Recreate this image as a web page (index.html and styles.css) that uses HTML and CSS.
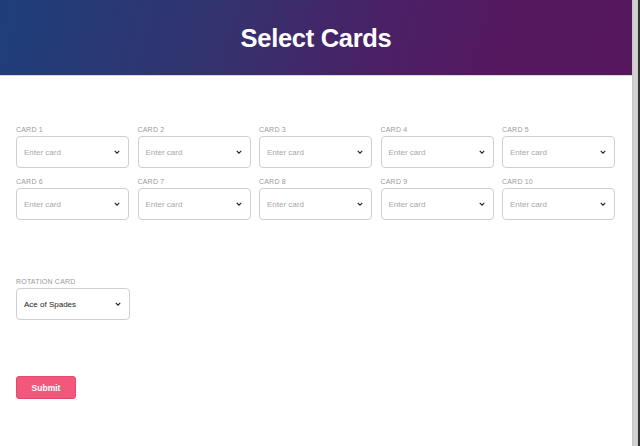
FILE: index.html
```html
<!DOCTYPE html>
<html>
<head>
<meta charset="utf-8">
<link rel="stylesheet" href="styles.css">
</head>
<body>
<div class="window">
  <main class="page">
    <header class="hero"><h1>Select Cards</h1></header>
    <section class="content">
      <div class="grid">
        <div class="field"><label>Card 1</label><div class="select placeholder"><span>Enter card</span><svg viewBox="0 0 8 5"><path d="M1 1l3 3 3-3"/></svg></div></div>
        <div class="field"><label>Card 2</label><div class="select placeholder"><span>Enter card</span><svg viewBox="0 0 8 5"><path d="M1 1l3 3 3-3"/></svg></div></div>
        <div class="field"><label>Card 3</label><div class="select placeholder"><span>Enter card</span><svg viewBox="0 0 8 5"><path d="M1 1l3 3 3-3"/></svg></div></div>
        <div class="field"><label>Card 4</label><div class="select placeholder"><span>Enter card</span><svg viewBox="0 0 8 5"><path d="M1 1l3 3 3-3"/></svg></div></div>
        <div class="field"><label>Card 5</label><div class="select placeholder"><span>Enter card</span><svg viewBox="0 0 8 5"><path d="M1 1l3 3 3-3"/></svg></div></div>
        <div class="field"><label>Card 6</label><div class="select placeholder"><span>Enter card</span><svg viewBox="0 0 8 5"><path d="M1 1l3 3 3-3"/></svg></div></div>
        <div class="field"><label>Card 7</label><div class="select placeholder"><span>Enter card</span><svg viewBox="0 0 8 5"><path d="M1 1l3 3 3-3"/></svg></div></div>
        <div class="field"><label>Card 8</label><div class="select placeholder"><span>Enter card</span><svg viewBox="0 0 8 5"><path d="M1 1l3 3 3-3"/></svg></div></div>
        <div class="field"><label>Card 9</label><div class="select placeholder"><span>Enter card</span><svg viewBox="0 0 8 5"><path d="M1 1l3 3 3-3"/></svg></div></div>
        <div class="field"><label>Card 10</label><div class="select placeholder"><span>Enter card</span><svg viewBox="0 0 8 5"><path d="M1 1l3 3 3-3"/></svg></div></div>
      </div>
      <div class="rotation">
        <div class="field"><label>Rotation Card</label><div class="select"><span>Ace of Spades</span><svg viewBox="0 0 8 5"><path d="M1 1l3 3 3-3"/></svg></div></div>
      </div>
      <button class="submit">Submit</button>
    </section>
  </main>
  <div class="edge"></div>
</div>
</body>
</html>
```

FILE: styles.css
```css
html, body {
  margin: 0;
  padding: 0;
  background: #fff;
  height: 100%;
}
body {
  font-family: "Liberation Sans", Arial, sans-serif;
  overflow: hidden;
}
.window {
  display: flex;
  height: 446px;
}
.page {
  width: 632px;
  flex: none;
}
.edge {
  width: 6px;
  background: linear-gradient(to right, #c4c4c4, #d6d6d6 50%, #c8c8c8);
  border-right: 2px solid #333;
}
.hero {
  height: 75px;
  border-bottom: 1px solid #d8d8d8;
  background: linear-gradient(105deg, #1e3f7b 0%, #34336f 35%, #4a2066 60%, #55185f 80%, #56175e 100%);
  display: flex;
  align-items: center;
  justify-content: center;
}
.hero h1 {
  margin: 0;
  color: #fff;
  font-size: 25.5px;
  font-weight: bold;
  letter-spacing: -0.3px;
  padding-top: 2px;
}
.content {
  padding: 50px 16px 0 16px;
}
.grid {
  display: grid;
  grid-template-columns: repeat(5, 1fr);
  column-gap: 8.5px;
  row-gap: 10px;
  width: 599px;
}
.field {
  display: flex;
  flex-direction: column;
}
.field label {
  display: block;
  height: 10px;
  font-size: 7px;
  line-height: 8px;
  letter-spacing: 0.2px;
  text-transform: uppercase;
  color: #9a9a9a;
}
.select {
  box-sizing: border-box;
  height: 32px;
  border: 1px solid #cfcfcf;
  border-radius: 4px;
  display: flex;
  align-items: center;
  justify-content: space-between;
  padding: 0 8px 0 7px;
  font-size: 8px;
  color: #222;
}
.select.placeholder {
  color: #a8a8a8;
}
.select svg {
  width: 6px;
  height: 4px;
  fill: none;
  stroke: #222;
  stroke-width: 1.5;
}
.rotation {
  margin-top: 58px;
  width: 113.6px;
}
.submit {
  margin-top: 56px;
  width: 60px;
  height: 23px;
  border: 1px solid #e6496f;
  border-radius: 3px;
  background: #f3587c;
  color: #fff;
  font-family: "Liberation Sans", Arial, sans-serif;
  font-size: 8.5px;
  font-weight: bold;
  padding: 0;
  display: block;
}
```
